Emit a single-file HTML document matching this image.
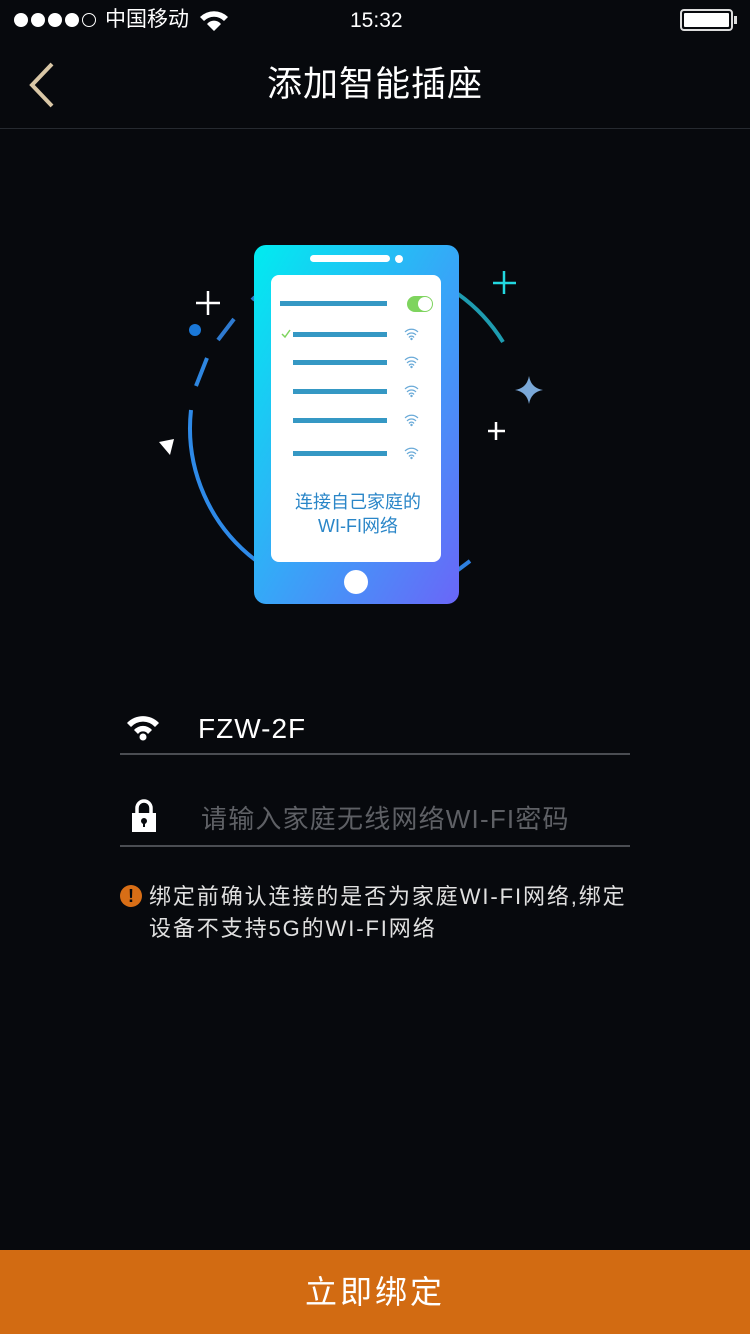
<!DOCTYPE html>
<html><head><meta charset="utf-8"><style>
body{margin:0;width:750px;height:1334px;background:#07090d;position:relative;overflow:hidden;font-family:"Liberation Sans","Noto Sans CJK SC",sans-serif;color:#fff}
.abs{position:absolute}
.d{position:absolute;top:13px;width:14px;height:14px;border-radius:50%;background:#fff;box-sizing:border-box}
</style></head><body>
<div class="d" style="left:14px"></div><div class="d" style="left:31px"></div><div class="d" style="left:48px"></div><div class="d" style="left:65px"></div><div class="d" style="left:82px;background:none;border:1.5px solid #fff"></div>
<div class="abs" style="left:105px;top:7px;font-size:21px;line-height:26px">中国移动</div>
<svg class="abs" style="left:198px;top:9px" width="32" height="24" viewBox="0 0 32 24"><path d="M2 8 A20 20 0 0 1 30 8 L26 12 A14 14 0 0 0 6 12Z M9 15 A9 9 0 0 1 23 15 L16 22Z" fill="#fff"/></svg>
<div class="abs" style="left:350px;top:8px;font-size:21px;line-height:26px">15:32</div>
<div class="abs" style="left:680px;top:9px;width:53px;height:22px;border:2px solid #ddd;border-radius:4px;box-sizing:border-box;padding:2px"><div style="background:#fff;width:100%;height:100%;border-radius:1px"></div></div>
<div class="abs" style="left:734px;top:16px;width:3px;height:8px;background:#ddd"></div>
<svg class="abs" style="left:26px;top:62px" width="30" height="46"><path d="M26 2 L6 23 L26 44" stroke="#d9c7a6" stroke-width="4" fill="none"/></svg>
<div class="abs" style="left:0;top:62px;width:750px;text-align:center;font-size:35px;line-height:46px;letter-spacing:1px">添加智能插座</div>
<div class="abs" style="left:0;top:128px;width:750px;height:1px;background:#262a30"></div>

<svg class="abs" style="left:0;top:0" width="750" height="700">
<defs><linearGradient id="g" x1="0" y1="0" x2="1" y2="1"><stop offset="0" stop-color="#00ecf0"/><stop offset="0.55" stop-color="#3aa2f8"/><stop offset="1" stop-color="#6a66f8"/></linearGradient></defs>
<g fill="none" stroke-width="4">
<path d="M234 319 L218 340" stroke="#2e7ad0"/>
<path d="M207 358 L196 386" stroke="#2e86e0"/>
<path d="M191 410 A166 166 0 0 0 258 562" stroke="#2e8ae8"/>
<path d="M252 300 L255 297" stroke="#2a7ac8"/>
<path d="M458 294 A166 166 0 0 1 503 342" stroke="#1e9cb0"/>
<path d="M458 570 L470 561" stroke="#2e80e0"/>
</g>
<rect x="254" y="245" width="205" height="359" rx="12" fill="url(#g)"/>
<rect x="310" y="255" width="80" height="7" rx="3.5" fill="#fff"/>
<circle cx="399" cy="259" r="4" fill="#fff"/>
<rect x="271" y="275" width="170" height="287" rx="8" fill="#fff"/>
<circle cx="356" cy="582" r="12" fill="#fff"/>
<g fill="#3598c4"><rect x="280" y="301" width="107" height="5"/><rect x="293" y="332" width="94" height="5"/><rect x="293" y="360" width="94" height="5"/><rect x="293" y="389" width="94" height="5"/><rect x="293" y="418" width="94" height="5"/><rect x="293" y="451" width="94" height="5"/></g>
<rect x="407" y="296" width="26" height="16" rx="8" fill="#7ed45e"/><circle cx="425" cy="304" r="7" fill="#fff"/>
<path d="M282 334 L285 337 L290 330" stroke="#7ed45e" stroke-width="1.5" fill="none"/>
<g stroke="#6aaad8" stroke-width="1.2" fill="none">
<g id="w"><path d="M405 332 A9 9 0 0 1 418 332 M407 335 A6 6 0 0 1 416 335 M409 337.5 A3 3 0 0 1 414 337.5"/></g>
<use href="#w" y="28"/><use href="#w" y="57"/><use href="#w" y="86"/><use href="#w" y="119"/>
</g>
<g fill="#6aaad8"><circle cx="411.5" cy="339" r="1.2"/><circle cx="411.5" cy="367" r="1.2"/><circle cx="411.5" cy="396" r="1.2"/><circle cx="411.5" cy="425" r="1.2"/><circle cx="411.5" cy="458" r="1.2"/></g>
<text x="358" y="508" text-anchor="middle" font-size="18" fill="#2a86c8" font-family="Liberation Sans,Noto Sans CJK SC,sans-serif">连接自己家庭的</text>
<text x="358" y="532" text-anchor="middle" font-size="18" fill="#2a86c8" font-family="Liberation Sans,Noto Sans CJK SC,sans-serif">WI-FI网络</text>
<g stroke="#fff" stroke-width="2.5"><path d="M196 303 H220 M208 291 V315"/><path d="M488 431 H505 M496 422 V440"/></g>
<path d="M493 283 H516 M504 271 V294" stroke="#22d8e0" stroke-width="2.5"/>
<circle cx="195" cy="330" r="6" fill="#1a78d8"/>
<path d="M159 442 L174 439 L170 455 Z" fill="#fff"/>
<path d="M529 376 Q531 388 543 390 Q531 392 529 404 Q527 392 515 390 Q527 388 529 376Z" fill="#7aa8d8"/>
</svg>

<svg class="abs" style="left:125px;top:713px" width="36" height="28" viewBox="0 0 36 28"><path d="M2 10 A22 22 0 0 1 34 10 L30 14 A16 16 0 0 0 6 14Z M9 17 A12 12 0 0 1 27 17 L23 21 A6 6 0 0 0 13 21Z" fill="#fff"/><circle cx="18" cy="24" r="3.5" fill="#fff"/></svg>
<div class="abs" style="left:198px;top:711px;font-size:28px;line-height:36px;letter-spacing:1px">FZW-2F</div>
<div class="abs" style="left:120px;top:753px;width:510px;height:2px;background:#4a4d52"></div>
<svg class="abs" style="left:130px;top:799px" width="28" height="34" viewBox="0 0 28 34"><path d="M7 14 V9 A7 7 0 0 1 21 9 V14" stroke="#fff" stroke-width="3.5" fill="none"/><rect x="2" y="14" width="24" height="19" fill="#fff"/><circle cx="14" cy="22" r="3" fill="#07090d"/><rect x="13" y="23" width="2" height="5" fill="#07090d"/></svg>
<div class="abs" style="left:201px;top:801px;font-size:26px;line-height:36px;color:#5e6065;letter-spacing:1.2px">请输入家庭无线网络WI-FI密码</div>
<div class="abs" style="left:120px;top:845px;width:510px;height:2px;background:#4a4d52"></div>
<div class="abs" style="left:120px;top:885px;width:22px;height:22px;border-radius:50%;background:#d86e16;color:#07090d;font-size:18px;line-height:22px;text-align:center;font-weight:bold">!</div>
<div class="abs" style="left:149px;top:881px;font-size:22px;line-height:32px;color:#e0e0e0;letter-spacing:1.9px;width:500px;white-space:nowrap">绑定前确认连接的是否为家庭WI-FI网络,绑定<br>设备不支持5G的WI-FI网络</div>
<div class="abs" style="left:0;top:1250px;width:750px;height:84px;background:#d26b12;text-align:center;font-size:32px;line-height:84px;letter-spacing:3px">立即绑定</div>
</body></html>
